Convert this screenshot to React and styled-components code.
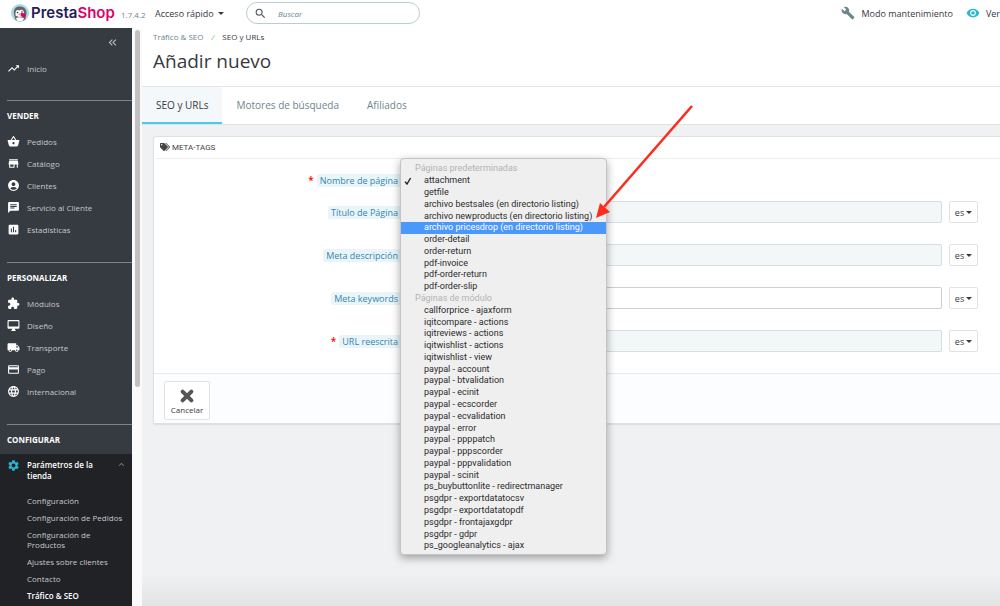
import React from 'react'
import styled, { createGlobalStyle, css } from 'styled-components'
import {
  MdTrendingUp,
  MdShoppingBasket,
  MdStore,
  MdAccountCircle,
  MdChat,
  MdAssessment,
  MdExtension,
  MdOutlineDesktopMac,
  MdLocalShipping,
  MdCreditCard,
  MdLanguage,
  MdSettings,
  MdSearch,
  MdBuild,
  MdVisibility,
  MdKeyboardArrowUp,
  MdKeyboardDoubleArrowLeft,
} from 'react-icons/md'
import { FaTags } from 'react-icons/fa'

const GlobalStyle = createGlobalStyle`
  :root {
    --color-dark: #363a41;
    --color-darker: #202226;
    --color-cyan: #25b9d7;
    --color-text: #363a41;
    --color-gray: #6c868e;
    --color-page: #eff1f2;
  }

  * {
    box-sizing: border-box;
  }

  body {
    margin: 0;
    overflow: hidden;
    font-family: 'Open Sans', 'Liberation Sans', sans-serif;
    font-size: 9px;
    color: var(--color-text);
    background: #fff;
  }

  button, input, select {
    font: inherit;
    color: inherit;
    margin: 0;
  }

  a {
    color: inherit;
    text-decoration: none;
  }

  ul {
    list-style: none;
    margin: 0;
    padding: 0;
  }

  svg {
    display: block;
    flex: none;
  }
`

const Page = styled.div`
  display: flex;
  flex-direction: column;
  height: 100vh;
`

const Header = styled.header`
  display: flex;
  align-items: center;
  flex: none;
  height: 28px;
  padding: 0 0 2px 11px;
  white-space: nowrap;
  background: #fff;
`

const Brand = styled.a`
  display: flex;
  align-items: center;
  gap: 2px;
  width: 104px;
  font-family: Inter, sans-serif;
  font-size: 15px;
  font-weight: 600;
  line-height: 20px;
  color: #251b5b;

  span span {
    color: #df0067;
  }
`

const Version = styled.span`
  width: 40px;
  padding: 3px 0 0 6px;
  font-size: 8px;
  color: var(--color-gray);
`

const QuickAccess = styled.button`
  display: flex;
  align-items: center;
  gap: 4px;
  width: 91px;
  padding: 0;
  border: 0;
  background: none;
`

const Caret = styled.span`
  border: 3px solid transparent;
  border-top-color: currentColor;
  border-bottom: 0;
`

const Search = styled.form`
  display: flex;
  align-items: center;
  gap: 11px;
  width: 174px;
  height: 22px;
  padding: 0 7px;
  border: 1px solid #bbcdd2;
  border-radius: 11px;
  color: #505458;

  input {
    flex: 1;
    min-width: 0;
    padding: 0;
    border: 0;
    outline: 0;
    font-size: 8px;
    font-style: italic;
    background: none;
  }
  input::placeholder {
    color: var(--color-gray);
    opacity: 1;
  }
`

const HeaderLinks = styled.nav`
  display: flex;
  gap: 13px;
  margin-left: auto;

  a {
    display: flex;
    flex: none;
    align-items: center;
    gap: 6px;
  }
`

const Body = styled.div`
  display: flex;
  flex: 1;
  min-height: 0;
`

const Sidebar = styled.nav`
  display: flex;
  flex-direction: column;
  flex: none;
  width: 132px;
  overflow: hidden;
  color: #c6c8ca;
  background: var(--color-dark);
`

const Collapse = styled.button`
  display: flex;
  align-self: flex-end;
  margin: 8px 13px 0 0;
  padding: 0;
  border: 0;
  background: none;
`

const ItemLink = styled.a`
  display: flex;
  align-items: center;
  gap: 7px;
  height: 22px;
  padding-left: 7px;
  font-size: 8px;

  svg {
    color: #fff;
  }
`

const Home = styled.div`
  padding: 8px 0 21px;
`

const Section = styled.section`
  margin-left: ${({ $open }) => ($open ? 0 : '7px')};
  padding-bottom: 22px;

  ${ItemLink} {
    padding-left: 0;
  }
`

const SectionTitle = styled.h2`
  margin: 0;
  padding: 10px 0 9px;
  border-top: 1px solid #7b868c;
  font-size: 8px;
  font-weight: 700;
  line-height: 10px;
  text-transform: uppercase;
  color: #fff;

  ${({ $open }) =>
    $open &&
    css`
      margin-left: 7px;
    `}
`

const ActiveBlock = styled.div`
  height: 200px;
  padding: 5px 5px 0 7px;
  background: var(--color-darker);
`

const ActiveLink = styled.a`
  display: flex;
  align-items: flex-start;
  gap: 7px;
  font-size: 8px;
  font-weight: 600;
  line-height: 11px;
  color: #fff;

  span {
    flex: 1;
    max-width: 78px;
  }
  svg:first-child {
    color: var(--color-cyan);
  }
  svg:last-child {
    margin-left: auto;
    color: #6c868e;
  }
`

const SubMenu = styled.ul`
  display: flex;
  flex-direction: column;
  gap: 7px;
  padding: 15px 0 0 20px;
  font-size: 8px;
  line-height: 10px;
`

const SubLink = styled.a`
  display: block;
  max-width: ${({ $narrow }) => ($narrow ? '80px' : 'none')};
  white-space: ${({ $narrow }) => ($narrow ? 'normal' : 'nowrap')};
  font-weight: ${({ $current }) => ($current ? 600 : 400)};
  color: ${({ $current }) => ($current ? '#fff' : 'inherit')};
`

const ScrollTrack = styled.div`
  flex: none;
  width: 10px;
  padding: 2px 2px 0 3px;
  background: #fafafa;
`

const ScrollThumb = styled.div`
  height: 62%;
  border-radius: 3px;
  background: #c1c1c1;
`

const Main = styled.main`
  flex: 1;
  min-width: 0;
  background: linear-gradient(to top, #e2e3e4, var(--color-page) 32px);
`

const PageHead = styled.div`
  padding: 3px 0 0 11px;
  height: 59px;
  border-bottom: 1px solid #e1e6e8;
  background: #fff;

  h1 {
    margin: 4px 0 0;
    font-size: 19px;
    font-weight: 400;
    line-height: 30px;
  }
`

const Breadcrumb = styled.div`
  display: flex;
  gap: 8px;
  font-size: 8px;
  line-height: 11px;

  a {
    color: var(--color-gray);
  }
  i {
    color: #72c279;
  }
`

const Tabs = styled.div`
  display: flex;
  height: 38px;
  border-bottom: 1px solid #dfe3e5;
  background: #fff;
`

const Tab = styled.button`
  padding: 0 14px 2px;
  border: 0;
  font-size: 10px;
  color: ${({ $active }) => ($active ? 'var(--color-text)' : 'var(--color-gray)')};
  background: ${({ $active }) => ($active ? '#f4f8fb' : 'none')};
  box-shadow: ${({ $active }) => ($active ? 'inset 0 -2px 0 #48cde8' : 'none')};
`

const Panel = styled.section`
  margin: 11px 0 0 11px;
  border: 1px solid #dbe1e4;
  border-right: 0;
  border-radius: 3px 0 0 3px;
  background: #fff;
  box-shadow: 0 1px 1px rgba(0, 0, 0, 0.08);
`

const PanelTitle = styled.h3`
  display: flex;
  align-items: center;
  gap: 2px;
  height: 22px;
  margin: 0 0 0 2px;
  padding: 0 0 1px 4px;
  border-bottom: 1px solid #eee;
  font-family: Roboto, 'Open Sans', sans-serif;
  font-size: 8px;
  font-weight: 400;
  text-transform: uppercase;
  color: #444;
`

const Form = styled.form`
  display: flex;
  flex-direction: column;
  gap: 21px;
  padding: 10px 22px 21px 0;
`

const Row = styled.div`
  display: flex;
  align-items: center;
  height: 22px;
  margin-bottom: ${({ $tight }) => ($tight ? '-11px' : 0)};
`

const LabelCell = styled.div`
  display: flex;
  justify-content: flex-end;
  align-items: center;
  gap: 3px;
  flex: 0 0 247px;

  b {
    font-size: 10px;
    font-weight: 600;
    color: #f00;
  }
  label {
    padding: 0 3px;
    border-radius: 2px;
    line-height: 13px;
    color: #3586ae;
    background: #eaf5fa;
  }
`

const TextInput = styled.input`
  flex: 1;
  min-width: 0;
  height: 22px;
  margin: 0 7px 0 5px;
  padding: 0 4px;
  border: 1px solid ${({ $plain }) => ($plain ? '#ccd0d4' : '#d3dfe2')};
  border-radius: 2px;
  background: ${({ $plain }) => ($plain ? '#fff' : '#f3f7f8')};
`

const LangButton = styled.button`
  display: flex;
  align-items: center;
  justify-content: center;
  gap: 2px;
  width: 29px;
  height: 22px;
  padding: 0;
  border: 1px solid #dfe3e5;
  border-radius: 2px;
  background: #fff;
`

const PanelFooter = styled.footer`
  padding: 7px 10px 3px;
  border-top: 1px solid #e6eaec;
  background: #fcfdfe;
`

const CancelButton = styled.button`
  display: flex;
  flex-direction: column;
  align-items: center;
  width: 46px;
  height: 39px;
  padding: 6px 0 0;
  border: 1px solid #dfe3e5;
  border-radius: 2px;
  font-size: 8px;
  line-height: 11px;
  background: #fff;
`

const SelectBox = styled.div`
  position: relative;
  margin-left: -1px;

  select {
    width: 190px;
    height: 22px;
    margin-left: 6px;
    border: 1px solid #d3dfe2;
    border-radius: 2px;
    background: #fff;
  }
`

// Open menu, drawn over the form
const Menu = styled.ul`
  position: absolute;
  z-index: 10;
  left: 0;
  top: -11px;
  display: flex;
  flex-direction: column;
  width: 207px;
  height: 397px;
  padding: 4px 0 2px;
  border: 1px solid #c4c4c4;
  border-radius: 4px;
  font-family: Roboto, Inter, sans-serif;
  font-size: 9px;
  color: #2b2b2b;
  background: #efefef;
  box-shadow: 0 3px 9px rgba(0, 0, 0, 0.35);

  li {
    display: flex;
    align-items: center;
    flex: 1;
    min-height: 0;
    padding-left: 23px;
    white-space: nowrap;
    line-height: 11px;
  }
  li.group {
    padding-left: 14px;
    color: #b3b3b3;
  }
  li.checked {
    padding-left: 3px;
  }
  li.checked svg {
    margin-right: 12px;
  }
  li.hover {
    color: #fff;
    background: #4a98fb;
  }
`

const Arrow = styled.svg`
  position: absolute;
  z-index: 11;
  left: 194px;
  top: -66px;
  pointer-events: none;
`

const SECTIONS = [
  {
    title: 'Vender',
    items: [
      [MdShoppingBasket, 'Pedidos'],
      [MdStore, 'Catálogo'],
      [MdAccountCircle, 'Clientes'],
      [MdChat, 'Servicio al Cliente'],
      [MdAssessment, 'Estadísticas'],
    ],
  },
  {
    title: 'Personalizar',
    items: [
      [MdExtension, 'Módulos'],
      [MdOutlineDesktopMac, 'Diseño'],
      [MdLocalShipping, 'Transporte'],
      [MdCreditCard, 'Pago'],
      [MdLanguage, 'Internacional'],
    ],
  },
]

const SUBMENU = [
  'Configuración',
  'Configuración de Pedidos',
  'Configuración de Productos',
  'Ajustes sobre clientes',
  'Contacto',
  'Tráfico & SEO',
]

const PAGES = [
  {
    group: 'Páginas predeterminadas',
    options: [
      'attachment',
      'getfile',
      'archivo bestsales (en directorio listing)',
      'archivo newproducts (en directorio listing)',
      'archivo pricesdrop (en directorio listing)',
      'order-detail',
      'order-return',
      'pdf-invoice',
      'pdf-order-return',
      'pdf-order-slip',
    ],
  },
  {
    group: 'Páginas de módulo',
    options: [
      'callforprice - ajaxform',
      'iqitcompare - actions',
      'iqitreviews - actions',
      'iqitwishlist - actions',
      'iqitwishlist - view',
      'paypal - account',
      'paypal - btvalidation',
      'paypal - ecinit',
      'paypal - ecscorder',
      'paypal - ecvalidation',
      'paypal - error',
      'paypal - ppppatch',
      'paypal - pppscorder',
      'paypal - pppvalidation',
      'paypal - scinit',
      'ps_buybuttonlite - redirectmanager',
      'psgdpr - exportdatatocsv',
      'psgdpr - exportdatatopdf',
      'psgdpr - frontajaxgdpr',
      'psgdpr - gdpr',
      'ps_googleanalytics - ajax',
    ],
  },
]

const FIELDS = [
  { id: 'title', label: 'Título de Página' },
  { id: 'description', label: 'Meta descripción' },
  { id: 'keywords', label: 'Meta keywords', plain: true },
  { id: 'url_rewrite', label: 'URL reescrita', required: true },
]

function Puffin() {
  return (
    <svg width="18" height="18" viewBox="0 0 36 36" aria-hidden="true">
      <circle cx="18" cy="18" r="18" fill="#a5dbe6" />
      <path d="M6 21C4 9 11 4 19 5c9 1 12 7 12 13l-2 12c-6 6-16 5-20 1z" fill="#6b6265" />
      <path d="M9 18c0-5 4-8 8-5 3-3 8-2 9 4l-1 7-9 2-7-3z" fill="#fff" />
      <path d="M10 28c4-2 11-2 16 0l-2 5c-4 2-8 2-12 0z" fill="#fff" />
      <circle cx="13" cy="17" r="1.6" fill="#33303a" />
      <circle cx="22" cy="16" r="1.6" fill="#33303a" />
      <path d="M19 19c5-2 10 0 11 4-1 2-3 2-4 5-2-3-5-3-7-5z" fill="#df0067" />
      <path d="M15 19c3-1 5 1 5 4l-5-1z" fill="#f2a08a" />
    </svg>
  )
}

function PageSelect() {
  return (
    <SelectBox>
      <select id="page" defaultValue="attachment">
        {PAGES.map(({ group, options }) => (
          <optgroup key={group} label={group}>
            {options.map((name) => (
              <option key={name}>{name}</option>
            ))}
          </optgroup>
        ))}
      </select>
      <Menu role="listbox" aria-label="Nombre de página">
        {PAGES.map(({ group, options }) => (
          <React.Fragment key={group}>
            <li className="group" role="presentation">
              {group}
            </li>
            {options.map((name) => {
              const checked = name === 'attachment'
              const hover = name.includes('pricesdrop')
              return (
                <li
                  key={name}
                  role="option"
                  aria-selected={checked}
                  className={checked ? 'checked' : hover ? 'hover' : undefined}
                >
                  {checked && (
                    <svg width="8" height="8" viewBox="0 0 8 8" aria-hidden="true">
                      <path d="M1 4.6 3 7 6.6 1" fill="none" stroke="#222" strokeWidth="1.4" />
                    </svg>
                  )}
                  {name}
                </li>
              )
            })}
          </React.Fragment>
        ))}
      </Menu>
      <Arrow width="104" height="118" viewBox="0 0 104 118" aria-hidden="true">
        <path d="M98 3 10 104" stroke="#fc2d1e" strokeWidth="2.6" fill="none" />
        <path d="M2 115 6 100 16 109z" fill="#fc2d1e" />
      </Arrow>
    </SelectBox>
  )
}

export default function App() {
  return (
    <Page>
      <GlobalStyle />
      <Header>
        <Brand href="#">
          <Puffin />
          <span>
            Presta<span>Shop</span>
          </span>
        </Brand>
        <Version>1.7.4.2</Version>
        <QuickAccess type="button">
          Acceso rápido <Caret />
        </QuickAccess>
        <Search role="search">
          <MdSearch size={13} />
          <input type="search" placeholder="Buscar" aria-label="Buscar" />
        </Search>
        <HeaderLinks>
          <a href="#">
            <MdBuild size={14} color="#6c868e" />
            Modo mantenimiento
          </a>
          <a href="#">
            <MdVisibility size={14} color="#25b9d7" />
            Ver
          </a>
        </HeaderLinks>
      </Header>
      <Body>
        <Sidebar>
          <Collapse type="button" aria-label="Contraer menú">
            <MdKeyboardDoubleArrowLeft size={13} color="#bebebe" />
          </Collapse>
          <Home>
            <ItemLink href="#">
              <MdTrendingUp size={13} />
              Inicio
            </ItemLink>
          </Home>
          {SECTIONS.map(({ title, items }) => (
            <Section key={title}>
              <SectionTitle>{title}</SectionTitle>
              {items.map(([Icon, name]) => (
                <ItemLink key={name} href="#">
                  <Icon size={13} />
                  {name}
                </ItemLink>
              ))}
            </Section>
          ))}
          <Section $open>
            <SectionTitle $open>Configurar</SectionTitle>
            <ActiveBlock>
              <ActiveLink href="#">
                <MdSettings size={13} />
                <span>Parámetros de la tienda</span>
                <MdKeyboardArrowUp size={11} />
              </ActiveLink>
              <SubMenu>
                {SUBMENU.map((name) => (
                  <li key={name}>
                    <SubLink
                      href="#"
                      $narrow={name.endsWith('Productos')}
                      $current={name === 'Tráfico & SEO'}
                    >
                      {name}
                    </SubLink>
                  </li>
                ))}
              </SubMenu>
            </ActiveBlock>
          </Section>
        </Sidebar>
        <ScrollTrack>
          <ScrollThumb />
        </ScrollTrack>
        <Main>
          <PageHead>
            <Breadcrumb>
              <a href="#">Tráfico &amp; SEO</a>
              <i>/</i>
              <span>SEO y URLs</span>
            </Breadcrumb>
            <h1>Añadir nuevo</h1>
          </PageHead>
          <Tabs role="tablist">
            <Tab type="button" role="tab" aria-selected="true" $active>
              SEO y URLs
            </Tab>
            <Tab type="button" role="tab">
              Motores de búsqueda
            </Tab>
            <Tab type="button" role="tab">
              Afiliados
            </Tab>
          </Tabs>
          <Panel>
            <PanelTitle>
              <FaTags size={10} />
              Meta-tags
            </PanelTitle>
            <Form id="meta">
              <Row $tight>
                <LabelCell>
                  <b>*</b>
                  <label htmlFor="page">Nombre de página</label>
                </LabelCell>
                <PageSelect />
              </Row>
              {FIELDS.map(({ id, label, plain, required }) => (
                <Row key={id}>
                  <LabelCell>
                    {required && <b>*</b>}
                    <label htmlFor={id}>{label}</label>
                  </LabelCell>
                  <TextInput id={id} type="text" $plain={plain} />
                  <LangButton type="button">
                    es <Caret />
                  </LangButton>
                </Row>
              ))}
            </Form>
            <PanelFooter>
              <CancelButton type="button">
                <svg width="16" height="16" viewBox="0 0 16 16" aria-hidden="true">
                  <path
                    d="M3.6 3.6l8.8 8.8M12.4 3.6l-8.8 8.8"
                    stroke="#555"
                    strokeWidth="4"
                    strokeLinecap="round"
                  />
                </svg>
                Cancelar
              </CancelButton>
            </PanelFooter>
          </Panel>
        </Main>
      </Body>
    </Page>
  )
}
